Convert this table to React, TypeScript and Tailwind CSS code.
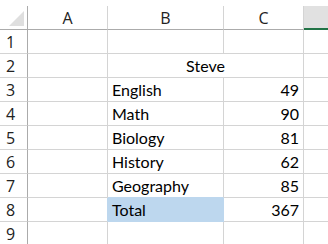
import React from "react";

type Row = {
  n: number;
  merged?: string;
  b?: string;
  c?: string;
  fill?: boolean;
};

const rows: Row[] = [
  { n: 1 },
  { n: 2, merged: "Steve" },
  { n: 3, b: "English", c: "49" },
  { n: 4, b: "Math", c: "90" },
  { n: 5, b: "Biology", c: "81" },
  { n: 6, b: "History", c: "62" },
  { n: 7, b: "Geography", c: "85" },
  { n: 8, b: "Total", c: "367", fill: true },
  { n: 9 },
];

const cellFont = { fontFamily: "Lato, 'Liberation Sans', sans-serif" };
const headFont = { fontFamily: "'Open Sans', 'Liberation Sans', sans-serif" };

const App: React.FC = () => {
  return (
    <div className="h-[244px] w-[328px] overflow-hidden bg-white pt-[6px] text-black">
      <div className="grid grid-cols-[28px_80px_116px_80px_1fr]">
        {/* header row */}
        <div className="relative h-[24px] border-b border-r border-[#ababab]">
          <svg className="absolute left-0 top-0" width="27" height="23" viewBox="0 0 27 23">
            <polygon points="24,5 24,20 9,20" fill="#dfdfdf" />
          </svg>
        </div>
        {["A", "B", "C"].map((l) => (
          <div
            key={l}
            style={headFont}
            className="flex h-[24px] items-center justify-center border-b border-r border-b-[#ababab] border-r-[#d4d4d4] text-[16px] text-[#222]"
          >
            {l}
          </div>
        ))}
        <div className="h-[24px] border-b-2 border-[#217346] bg-[#e1e1e1]" />

        {rows.map((r) => (
          <React.Fragment key={r.n}>
            <div
              style={headFont}
              className="flex h-[24px] items-center border-b border-r border-b-[#d4d4d4] border-r-[#ababab] pl-[6px] text-[16px] text-[#222]"
            >
              {r.n}
            </div>
            <div
              className={`h-[24px] border-b border-b-[#d4d4d4] border-r ${
                r.n === 8 ? "border-r-[#bdd7ee]" : "border-r-[#d4d4d4]"
              }`}
            />
            {r.merged ? (
              <div
                style={cellFont}
                className="col-span-2 flex h-[24px] items-end justify-center border-b border-r border-[#d4d4d4] text-[16px] leading-[22px]"
              >
                {r.merged}
              </div>
            ) : (
              <>
                <div
                  style={cellFont}
                  className={`flex h-[24px] items-end border-b border-r pl-[4px] text-[16px] leading-[22px] ${
                    r.fill ? "border-[#bdd7ee] bg-[#bdd7ee]" : r.n === 7 ? "border-b-[#bdd7ee] border-r-[#d4d4d4]" : "border-[#d4d4d4]"
                  }`}
                >
                  {r.b}
                </div>
                <div
                  style={cellFont}
                  className="flex h-[24px] items-end justify-end border-b border-r border-[#d4d4d4] pr-[4px] text-[16px] leading-[22px]"
                >
                  {r.c}
                </div>
              </>
            )}
            <div className="h-[24px] border-b border-[#d4d4d4]" />
          </React.Fragment>
        ))}
      </div>
    </div>
  );
};

export default App;
